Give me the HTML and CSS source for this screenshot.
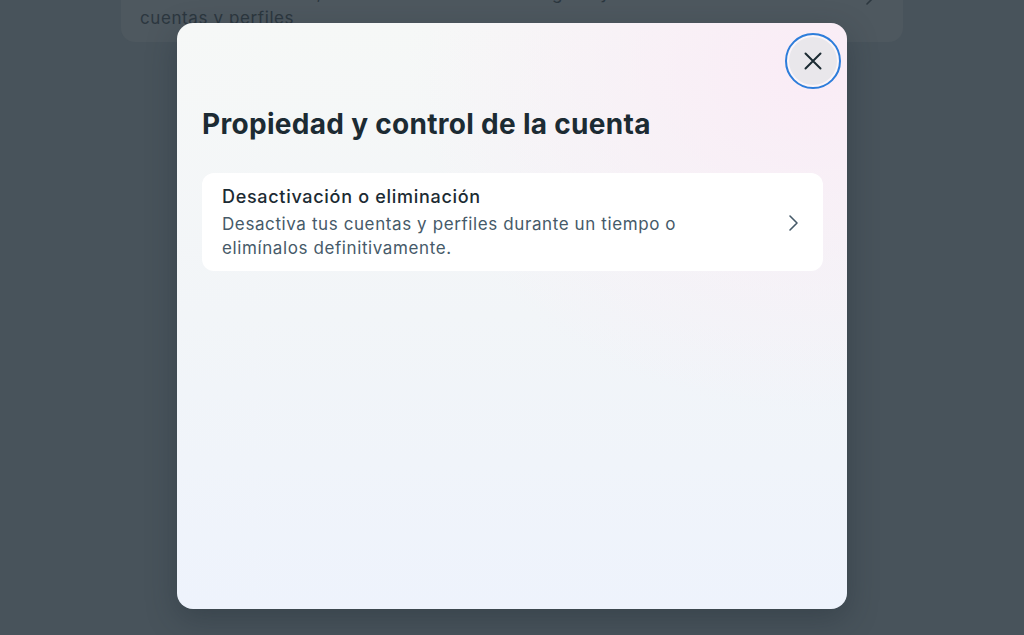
FILE: index.html
```html
<!DOCTYPE html>
<html lang="es">
<head>
<meta charset="utf-8">
<link rel="stylesheet" href="styles.css">
</head>
<body>
<div class="page">
  <div class="bg-card">
    <p class="bg-text">Administra tus datos, modifica tu contacto de legado y desactiva o elimina tus cuentas y perfiles</p>
    <svg class="bg-chev" width="10" height="16" viewBox="0 0 10 16"><path d="M2 2 L8 8 L2 14" fill="none" stroke="#2c373f" stroke-width="1.6" stroke-linecap="round" stroke-linejoin="round"/></svg>
  </div>
</div>
<div class="overlay">
  <div class="modal">
    <div class="modal-head">
      <button class="close" aria-label="Cerrar">
        <svg width="20" height="20" viewBox="0 0 20 20"><path d="M2.5 2.5 L17.5 17.5 M17.5 2.5 L2.5 17.5" stroke="#1c2b33" stroke-width="2" stroke-linecap="round"/></svg>
      </button>
    </div>
    <h1 class="title">Propiedad y control de la cuenta</h1>
    <div class="item">
      <div class="item-text">
        <div class="item-title">Desactivación o eliminación</div>
        <div class="item-sub">Desactiva tus cuentas y perfiles durante un tiempo o elimínalos definitivamente.</div>
      </div>
      <svg class="chev" width="12" height="18" viewBox="0 0 12 18"><path d="M3 2 L10 9 L3 16" fill="none" stroke="#465a69" stroke-width="1.6" stroke-linecap="round" stroke-linejoin="round"/></svg>
    </div>
  </div>
</div>
</body>
</html>
```
FILE: styles.css
```css
* { box-sizing: border-box; }
html, body { margin: 0; height: 100%; }
body {
  background: #48535b;
  font-family: Inter, "Noto Sans", sans-serif;
  overflow: hidden;
}
.page {
  padding: 0 121px;
}
.bg-card {
  margin-top: -30px;
  height: 72px;
  background: #4e585f;
  border-radius: 0 0 14px 14px;
  padding: 11px 20px 0 19px;
  display: flex;
  justify-content: space-between;
  align-items: flex-start;
}
.bg-text {
  margin: 0;
  width: 705px;
  font-size: 17px;
  line-height: 25px;
  letter-spacing: 0.6px;
  color: #2c373f;
}
.bg-chev { margin-top: 9px; margin-right: 8px; }
.overlay {
  position: absolute;
  inset: 0;
  display: flex;
  justify-content: center;
  padding-top: 23px;
}
.modal {
  width: 670px;
  height: 586px;
  border-radius: 16px;
  background:
    radial-gradient(ellipse at 95% 8%, rgba(250, 236, 246, 1) 0%, rgba(250, 236, 246, 0) 45%),
    linear-gradient(180deg, #f6f8f7 0%, #f2f5f8 50%, #eef3fc 100%);
  box-shadow: 0 10px 30px rgba(30, 40, 48, 0.35);
  padding: 0 24px 0 25px;
}
.modal-head {
  display: flex;
  justify-content: flex-end;
  padding-top: 10px;
  margin-right: -18px;
}
.close {
  width: 56px;
  height: 56px;
  border-radius: 50%;
  border: 2px solid #2d7ddb;
  background: #e9e7eb;
  box-shadow: inset 0 0 0 2px #fbf5f9;
  display: flex;
  align-items: center;
  justify-content: center;
  padding: 0;
}
.title {
  margin: 17px 0 0;
  font-size: 28px;
  line-height: 36px;
  font-weight: 700;
  letter-spacing: 0.3px;
  color: #1c2b33;
}
.item {
  margin-top: 31px;
  background: #ffffff;
  border-radius: 12px;
  padding: 12px 24px 11px 20px;
  display: flex;
  align-items: center;
  gap: 20px;
}
.item-text { flex: 1; }
.item-title {
  font-size: 18px;
  line-height: 24px;
  font-weight: 500;
  letter-spacing: 0.7px;
  color: #1c2b33;
  margin-bottom: 3px;
}
.item-sub {
  font-size: 17px;
  line-height: 24px;
  letter-spacing: 0.6px;
  color: #465a69;
  width: 500px;
}
.chev { flex: none; }
```
